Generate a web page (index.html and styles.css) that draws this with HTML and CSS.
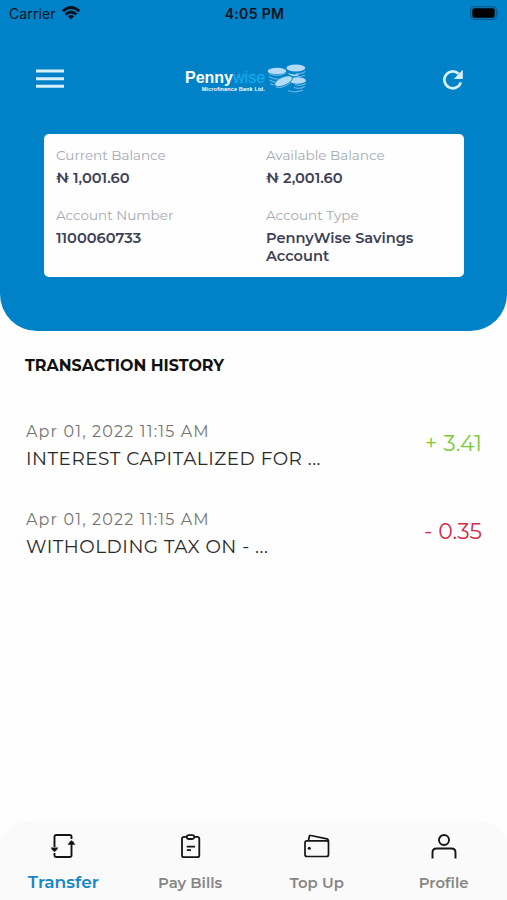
FILE: index.html
```html
<!DOCTYPE html>
<html lang="en">
<head>
<meta charset="utf-8">
<title>Pennywise</title>
<link rel="stylesheet" href="styles.css">
</head>
<body>
<div class="app">
  <header class="hero">
    <div class="status">
      <div class="carrier"><span>Carrier</span>
        <svg width="18" height="14" viewBox="0 0 18 14" fill="none" stroke="#07131c" stroke-width="2.7"><path d="M.8 5.200Q9-2.200 17.200 5.200M3.600 8.400q5.400-4.800 10.800 0"/><path d="M9 13.500 5.900 10.300q3.100-2.500 6.200 0z" fill="#07131c" stroke="none"/></svg>
      </div>
      <span class="time">4:05 PM</span>
      <svg class="battery" width="30" height="14" viewBox="0 0 30 14"><rect x=".7" y=".7" width="25.6" height="12.6" rx="3.5" fill="none" stroke="#07598a" stroke-width="1.3"/><rect x="2.3" y="2.3" width="22.4" height="9.4" rx="2" fill="#000"/><path d="M27.5 4.8q2.2 2.2 0 4.4z" fill="#07598a"/></svg>
    </div>
    <div class="topbar">
      <svg class="menu" width="28" height="20" viewBox="0 0 28 20" fill="#d8effc"><path d="M0 .5h28v3H0zM0 8.2h28v3H0zM0 15.8h28v3H0z"/></svg>
      <div class="brand">
        <div class="words"><div class="name">Penny<span>wise</span></div><div class="sub">Microfinance Bank Ltd.</div></div>
        <svg width="40" height="30" viewBox="0 0 40 30"><g fill="none" stroke="#62b2e2" stroke-width="1.200"><path d="M1.500 9q8 5 17 0M2 12.500q6 4 13 2M2.500 16q4 2.500 7 2M3 19.500q2 1.500 6 1.500M29 9.500q5 1 9.500-2M30 12.500q4 .5 8-1.500M28 20.500q6 2 11-1M27 23.500q6 2 11-1M21 26.500q7 3 15-.5"/></g><g fill="#b5daf3"><ellipse cx="10" cy="7" rx="9.300" ry="3.200"/><ellipse cx="28.800" cy="4" rx="9.500" ry="3.500"/><path d="M20 8.500q6 3.500 13 1l-3 2.500q-6 1-10-3.500z"/><ellipse cx="30.500" cy="16.500" rx="8.500" ry="3.300"/><ellipse cx="16.500" cy="17.200" rx="9.600" ry="4.200" transform="rotate(-24 16.500 17.200)" stroke="#0082c9" stroke-width=".8"/></g><path d="M9 23q6 2 14-4" fill="none" stroke="#75bde8"/></svg>
      </div>
      <svg class="refresh" width="22" height="22" viewBox="0 0 22 22"><path d="M18.800 13.300A8.400 8.400 0 1 1 16.600 4.800" fill="none" stroke="#d8effc" stroke-width="2.700"/><path d="M20.800.8v9.200h-9z" fill="#d8effc"/></svg>
    </div>
    <section class="card">
      <div class="field"><div class="label">Current Balance</div><div class="value">₦ 1,001.60</div></div>
      <div class="field"><div class="label">Available Balance</div><div class="value">₦ 2,001.60</div></div>
      <div class="field"><div class="label">Account Number</div><div class="value">1100060733</div></div>
      <div class="field"><div class="label">Account Type</div><div class="value">PennyWise Savings<br>Account</div></div>
    </section>
  </header>
  <main class="history">
    <h1>TRANSACTION HISTORY</h1>
    <div class="row"><div><div class="date">Apr 01, 2022 11:15 AM</div><div class="desc">INTEREST CAPITALIZED FOR ...</div></div><div class="amount credit">+ 3.41</div></div>
    <div class="row"><div><div class="date">Apr 01, 2022 11:15 AM</div><div class="desc">WITHOLDING TAX ON - ...</div></div><div class="amount debit">- 0.35</div></div>
  </main>
  <nav class="tabs">
    <div class="tab active">
      <svg width="28" height="28" viewBox="0 0 28 28" fill="none" stroke="#151515" stroke-width="1.900"><path d="M5.500 15V4.800Q5.500 3 7.300 3h13.400q1.800 0 1.800 1.800V7M5.500 21v2.200Q5.500 25 7.300 25h13.400q1.800 0 1.800-1.800V11"/><path d="M1.700 15.500h7.600q-1 2.700-3.800 4.500-2.800-1.800-3.800-4.500zM18.700 12.800h7.600q-1-2.700-3.800-4.500-2.800 1.800-3.800 4.500z" fill="#151515" stroke="none"/></svg>
      <span>Transfer</span></div>
    <div class="tab bills">
      <svg width="28" height="28" viewBox="0 0 28 28" fill="none" stroke="#151515" stroke-width="1.800"><path d="M10 4.800H8q-2 0-2 2v16.400q0 2 2 2h13.300q2 0 2-2V6.800q0-2-2-2H19"/><rect x="10.800" y="3.200" width="7.500" height="3.800" rx="1.900"/><path d="M10.800 14.700h8.200M10.800 18.200h4.200"/></svg>
      <span>Pay Bills</span></div>
    <div class="tab top">
      <svg width="28" height="28" viewBox="0 0 28 28" fill="none" stroke="#151515" stroke-width="1.700"><rect x="2" y="8.800" width="23.500" height="15.700" rx="2"/><path d="m5.500 8.500.8-4q.3-1.300 1.600-1L24 6.800q1.500.4 1.500 3"/><circle cx="6.300" cy="16.300" r="1.500" fill="#151515" stroke="none"/></svg>
      <span>Top Up</span></div>
    <div class="tab profile">
      <svg width="28" height="28" viewBox="0 0 28 28" fill="none" stroke="#151515" stroke-width="1.900"><circle cx="14" cy="8" r="5"/><path d="M2.500 26.500v-6q0-4 4-4h15q4 0 4 4v6"/></svg>
      <span>Profile</span></div>
  </nav>
</div>
</body>
</html>
```
FILE: styles.css
```css
* { box-sizing: border-box; }
body { margin: 0; background: #fff; font-family: Montserrat, Inter, sans-serif; }
.app { width: 507px; height: 900px; display: flex; flex-direction: column; background: #fefefe; overflow: hidden; white-space: nowrap; }
.hero { height: 330.5px; background: #0082c9; border-radius: 0 0 37px 37px; flex: none; }
.status { height: 28px; display: grid; grid-template-columns: 1fr auto 1fr; align-items: center; padding: 0 7px 0 9px; font-family: Inter, sans-serif; color: #07131c; }
.carrier { display: flex; gap: 6px; align-items: center; font-size: 14px; letter-spacing: .1px; margin-top: -2px; }
.carrier svg { margin-top: -1px; }
.time { font-weight: 600; font-size: 14px; letter-spacing: .35px; margin-top: -2px; }
.battery { justify-self: end; margin-top: -2px; }
.topbar { height: 106px; display: grid; grid-template-columns: 149px 1fr 22px; align-items: center; padding: 0 43px 3px 36px; }
.menu { margin-top: -1px; }
.brand { display: flex; align-items: center; }
.words { width: 80px; margin-right: 2px; font-family: "Liberation Sans", sans-serif; font-weight: 700; color: #fff; padding-top: 3px; }
.name { font-size: 16px; line-height: 17px; }
.name span { color: #18a5e8; font-weight: 400; -webkit-text-stroke: .4px #18a5e8; }
.sub { font-size: 5.5px; line-height: 7px; text-align: right; letter-spacing: .13px; }
.brand svg { margin-top: -2px; }
.card { width: 420px; height: 143px; margin: 0 auto 0 44px; border-radius: 5px; background: #fefefe; display: grid; grid-template-columns: 210px 1fr; grid-template-rows: 59.5px 1fr; padding: 12px 12px 0; }
.label { font-size: 13.5px; line-height: 18px; color: #a4a9b4; }
.value { font-size: 14.6px; line-height: 18px; font-weight: 600; color: #3b4056; margin-top: 5px; }
.history { flex: 1; padding: 25px 25px 0 26px; }
h1 { margin: 0 0 45px -1px; font-size: 15.9px; line-height: 20px; font-weight: 700; color: #111; }
.row { height: 88px; display: flex; justify-content: space-between; }
.date { font-size: 16px; line-height: 22px; color: #747474; letter-spacing: 1.15px; }
.desc { font-size: 18.4px; line-height: 24px; color: #292929; margin-top: 4px; letter-spacing: .52px; }
.amount { font-size: 22px; line-height: 26px; padding-top: 10px; }
.credit { color: #7acb35; }
.debit { color: #d02d48; }
.tabs { height: 77px; flex: none; display: grid; grid-template-columns: repeat(4, 1fr); padding: 9px 0 0; background: #fafafa; border-radius: 28px 28px 0 0; box-shadow: 0 0 4px #f4f4f4; }
.tab { display: flex; flex-direction: column; align-items: center; font-size: 14.9px; font-weight: 600; line-height: 20px; color: #858585; }
.tab span { margin-top: 13px; }
.active { color: #1586c8; font-size: 17px; }
.active span { margin-top: 12px; }
```
